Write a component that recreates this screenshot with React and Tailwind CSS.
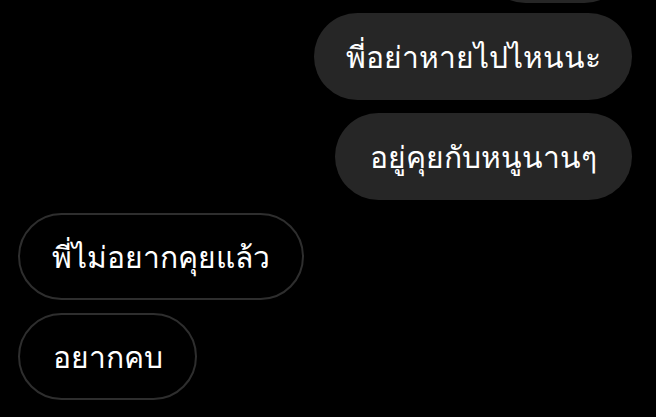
export default function App() {
  const font = { fontFamily: '"Noto Sans", "DejaVu Sans", sans-serif' };
  return (
    <div className="w-[656px] h-[417px] bg-black overflow-hidden" style={font}>
      <div className="flex flex-col gap-[13px] pr-[24px] pl-[18px]">
        <div className="self-end mt-[-84px] mb-[-3px] h-[87px] w-[146px] mr-[4px] rounded-full bg-[#262626]" />
        <div className="self-end h-[87px] w-[318px] flex items-center justify-center rounded-full bg-[#262626] text-white text-[30px]">
          พี่อย่าหายไปไหนนะ
        </div>
        <div className="self-end h-[87px] w-[297px] flex items-center justify-center rounded-full bg-[#262626] text-white text-[30px]">
          อยู่คุยกับหนูนานๆ
        </div>
        <div className="self-start h-[87px] w-[286px] flex items-center justify-center rounded-full border-2 border-[#2e2e2e] text-white text-[30px]">
          พี่ไม่อยากคุยแล้ว
        </div>
        <div className="self-start h-[87px] w-[179px] flex items-center justify-center rounded-full border-2 border-[#2e2e2e] text-white text-[30px]">
          อยากคบ
        </div>
      </div>
    </div>
  );
}
